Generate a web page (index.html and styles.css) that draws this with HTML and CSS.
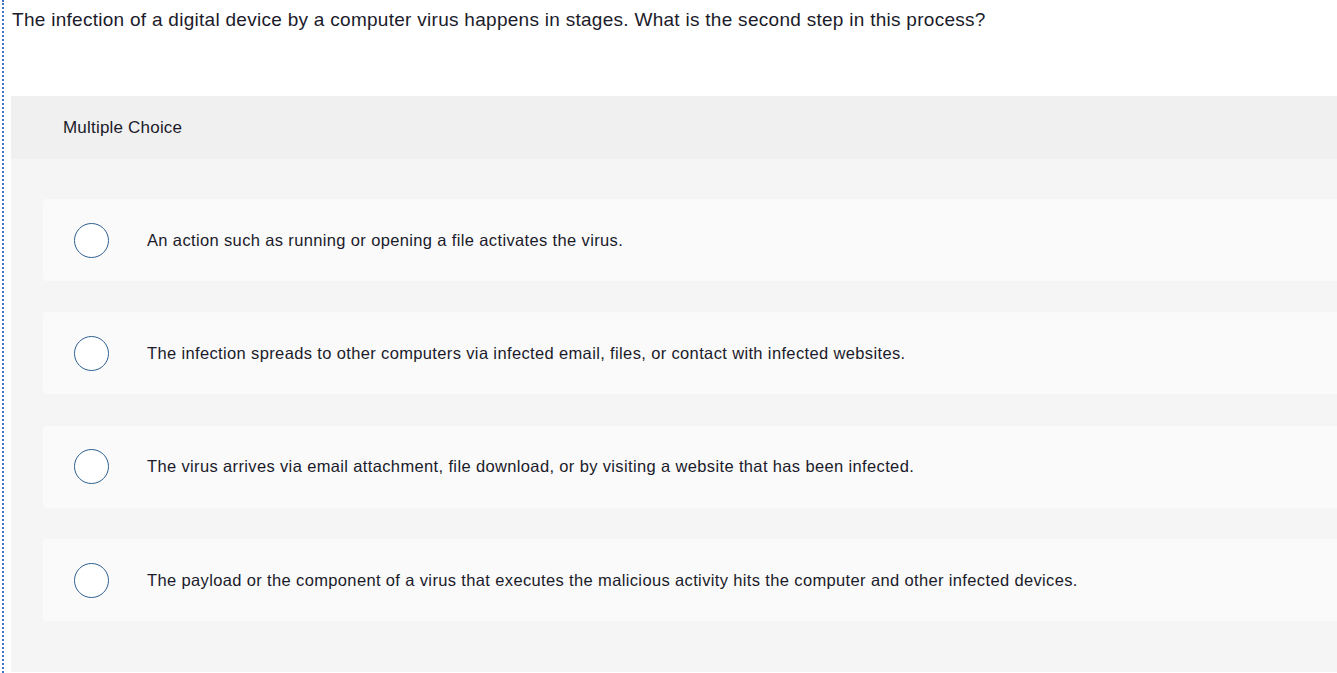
FILE: index.html
```html
<!DOCTYPE html>
<html>
<head>
<meta charset="utf-8">
<link rel="stylesheet" href="styles.css">
</head>
<body>
<div class="frame">
  <p class="question">The infection of a digital device by a computer virus happens in stages. What is the second step in this process?</p>
  <div class="panel">
    <div class="panel-head">Multiple Choice</div>
    <div class="choices">
      <div class="choice"><span class="radio"></span><span class="label">An action such as running or opening a file activates the virus.</span></div>
      <div class="choice"><span class="radio"></span><span class="label">The infection spreads to other computers via infected email, files, or contact with infected websites.</span></div>
      <div class="choice"><span class="radio"></span><span class="label">The virus arrives via email attachment, file download, or by visiting a website that has been infected.</span></div>
      <div class="choice"><span class="radio"></span><span class="label">The payload or the component of a virus that executes the malicious activity hits the computer and other infected devices.</span></div>
    </div>
  </div>
</div>
</body>
</html>
```

FILE: styles.css
```css
html, body {
  margin: 0;
  padding: 0;
  background: #ffffff;
  overflow: hidden;
}
body {
  font-family: "Liberation Sans", Arial, sans-serif;
  color: #1b1b2b;
}
.frame {
  margin-left: 2px;
  border-left: 2px dotted #3a75c4;
  height: 673px;
  padding-left: 7px;
  box-sizing: border-box;
}
.question {
  margin: 0;
  padding: 9px 0 0 1px;
  font-size: 19px;
  letter-spacing: 0.28px;
  line-height: 22px;
  height: 87px;
  box-sizing: border-box;
}
.panel {
  margin-top: 9px;
  background: #f5f5f5;
  height: 576px;
}
.panel-head {
  background: #f0f0f0;
  height: 63px;
  padding-left: 52px;
  display: flex;
  align-items: center;
  font-size: 17px;
  letter-spacing: 0.2px;
}
.choices {
  padding: 40px 0 0 32px;
  display: flex;
  flex-direction: column;
  gap: 31.4px;
}
.choice {
  background: #fafafa;
  border-radius: 4px 0 0 4px;
  height: 82px;
  display: flex;
  align-items: center;
}
.radio {
  width: 33px;
  height: 33px;
  border: 1.5px solid #2f6090;
  border-radius: 50%;
  background: #ffffff;
  margin-left: 31px;
  flex: none;
}
.label {
  margin-left: 38px;
  font-size: 16.5px;
  letter-spacing: 0.36px;
}
```
